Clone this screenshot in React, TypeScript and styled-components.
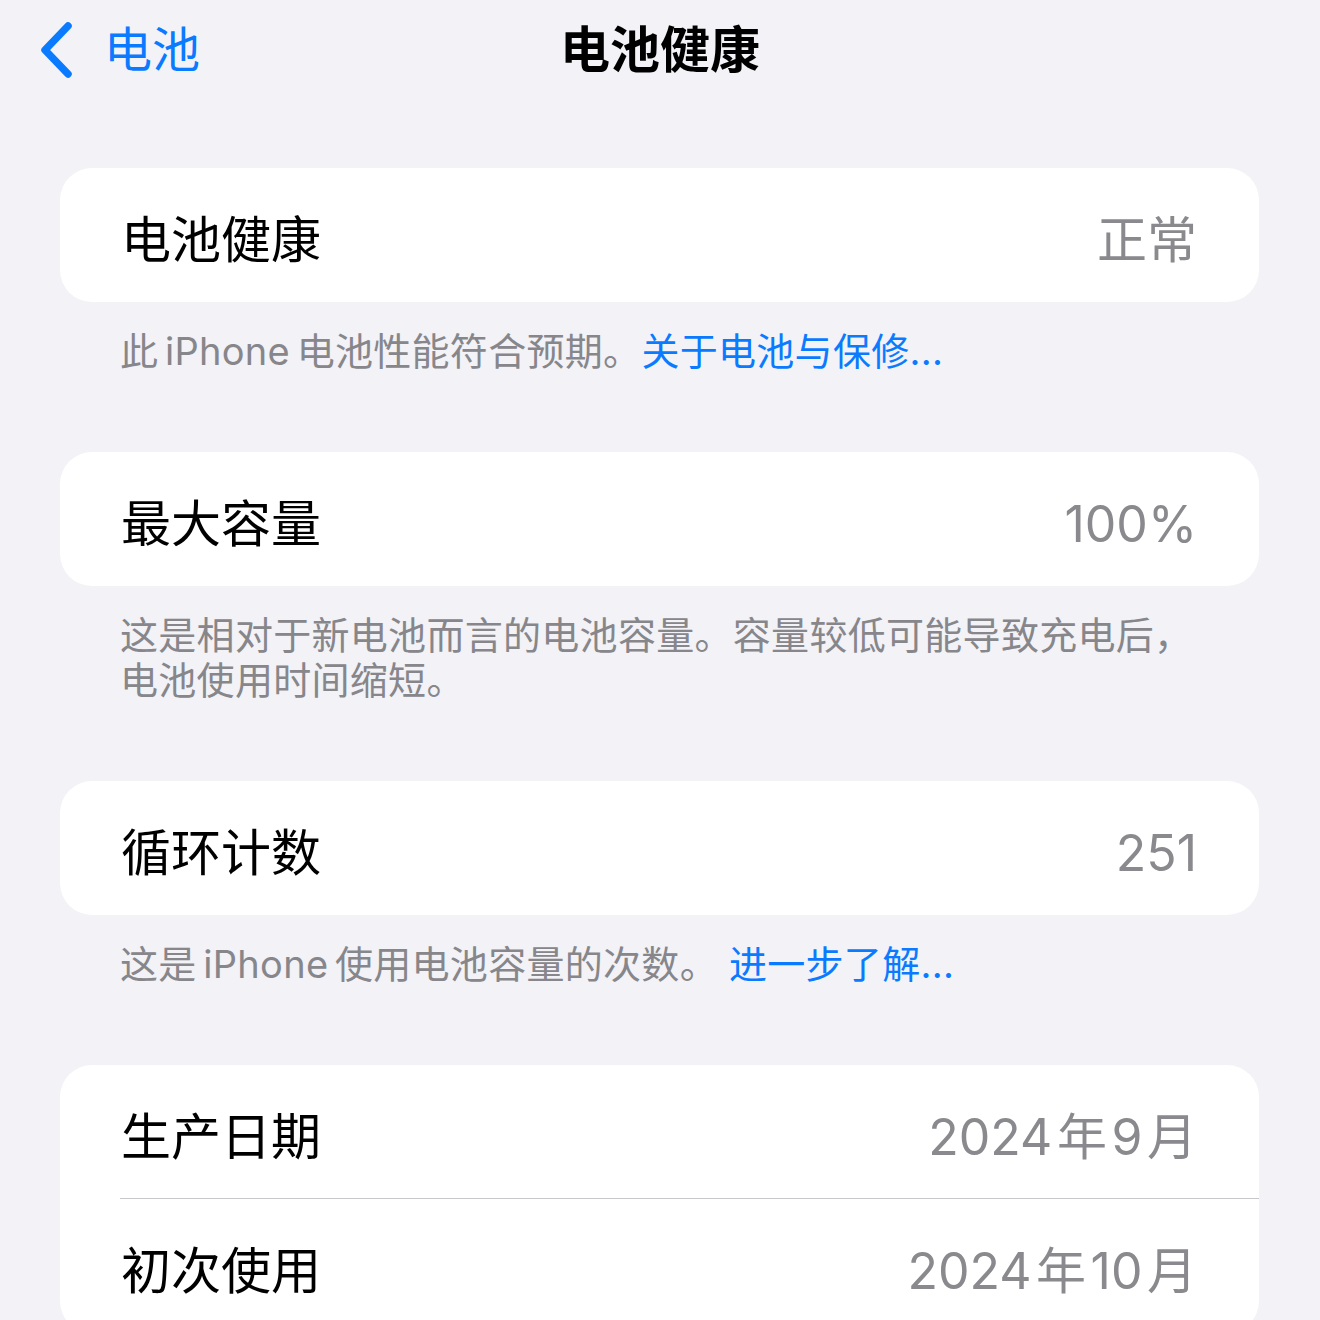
import { FC, ReactNode } from 'react';
import styled, { createGlobalStyle } from 'styled-components';

const GlobalStyle = createGlobalStyle`
  html, body {
    margin: 0;
    padding: 0;
    background: #f2f2f7;
  }
  body {
    font-family: Inter, "Noto Sans CJK SC", "Noto Sans", sans-serif;
    -webkit-font-smoothing: antialiased;
  }
  #root {
    width: 1320px;
    height: 1320px;
    overflow: hidden;
  }
`;

const Page = styled.div`
  width: 1320px;
  min-height: 1320px;
  background: #f2f2f7;
`;

const NavBar = styled.div`
  position: relative;
  height: 100px;
  display: flex;
  align-items: center;
  justify-content: center;
`;

const BackButton = styled.div`
  position: absolute;
  left: 38px;
  top: 0;
  height: 100px;
  display: flex;
  align-items: center;
  gap: 30px;
  color: #0a7aff;
`;

const BackLabel = styled.span`
  font-size: 48px;
  line-height: 1;
`;

const NavTitle = styled.h1`
  margin: 0;
  font-size: 50px;
  font-weight: 700;
  color: #000;
  line-height: 1;
`;

const Content = styled.div`
  display: flex;
  flex-direction: column;
  padding: 68px 61px 0 60px;
`;

const Section = styled.div`
  display: flex;
  flex-direction: column;
  margin-bottom: 78px;
`;

const Card = styled.div`
  background: #ffffff;
  border-radius: 32px;
  overflow: hidden;
`;

const Row = styled.div<{ $divider?: boolean }>`
  position: relative;
  height: 134px;
  display: flex;
  align-items: center;
  justify-content: space-between;
  padding: 9px 62px 0 61px;
  box-sizing: border-box;

  &::after {
    content: '';
    display: ${({ $divider }) => ($divider ? 'block' : 'none')};
    position: absolute;
    left: 60px;
    right: 0;
    bottom: 0;
    height: 1.5px;
    background: #c8c8cc;
  }
`;

const Label = styled.span`
  font-size: 50px;
  color: #000;
  line-height: 1;
`;

const Value = styled.span`
  font-size: 50px;
  color: #8a8a8e;
  line-height: 1;
`;

const Footer = styled.p`
  margin: 27px 0 0;
  padding: 0 60px;
  font-size: 38px;
  letter-spacing: 0.3px;
  line-height: 45px;
  color: #86868b;
`;

const Link = styled.span`
  color: #0a7aff;
`;

interface IRow {
  label: string;
  value: string;
}

interface IGroup {
  rows: IRow[];
  footer?: ReactNode;
}

const groups: IGroup[] = [
  {
    rows: [{ label: '电池健康', value: '正常' }],
    footer: (
      <>
        此{'\u2006'}iPhone{'\u2006'}电池性能符合预期。<Link>关于电池与保修...</Link>
      </>
    ),
  },
  {
    rows: [{ label: '最大容量', value: '100%' }],
    footer: '这是相对于新电池而言的电池容量。容量较低可能导致充电后，电池使用时间缩短。',
  },
  {
    rows: [{ label: '循环计数', value: '251' }],
    footer: (
      <>
        这是{'\u2006'}iPhone{'\u2006'}使用电池容量的次数。 <Link>进一步了解...</Link>
      </>
    ),
  },
  {
    rows: [
      { label: '生产日期', value: '2024\u200A年\u200A9\u200A月' },
      { label: '初次使用', value: '2024\u200A年\u200A10\u200A月' },
    ],
  },
];

const BackChevron: FC = () => (
  <svg width="36" height="58" viewBox="0 0 36 58" fill="none">
    <polyline
      points="30,5 7,29 30,53"
      stroke="#0a7aff"
      strokeWidth="7.5"
      strokeLinecap="round"
      strokeLinejoin="round"
    />
  </svg>
);

const App: FC = () => {
  return (
    <Page>
      <GlobalStyle />
      <NavBar>
        <BackButton>
          <BackChevron />
          <BackLabel>电池</BackLabel>
        </BackButton>
        <NavTitle>电池健康</NavTitle>
      </NavBar>
      <Content>
        {groups.map((group, gi) => (
          <Section key={gi}>
            <Card>
              {group.rows.map((row, ri) => (
                <Row key={row.label} $divider={ri < group.rows.length - 1}>
                  <Label>{row.label}</Label>
                  <Value>{row.value}</Value>
                </Row>
              ))}
            </Card>
            {group.footer && <Footer>{group.footer}</Footer>}
          </Section>
        ))}
      </Content>
    </Page>
  );
};

export default App;
